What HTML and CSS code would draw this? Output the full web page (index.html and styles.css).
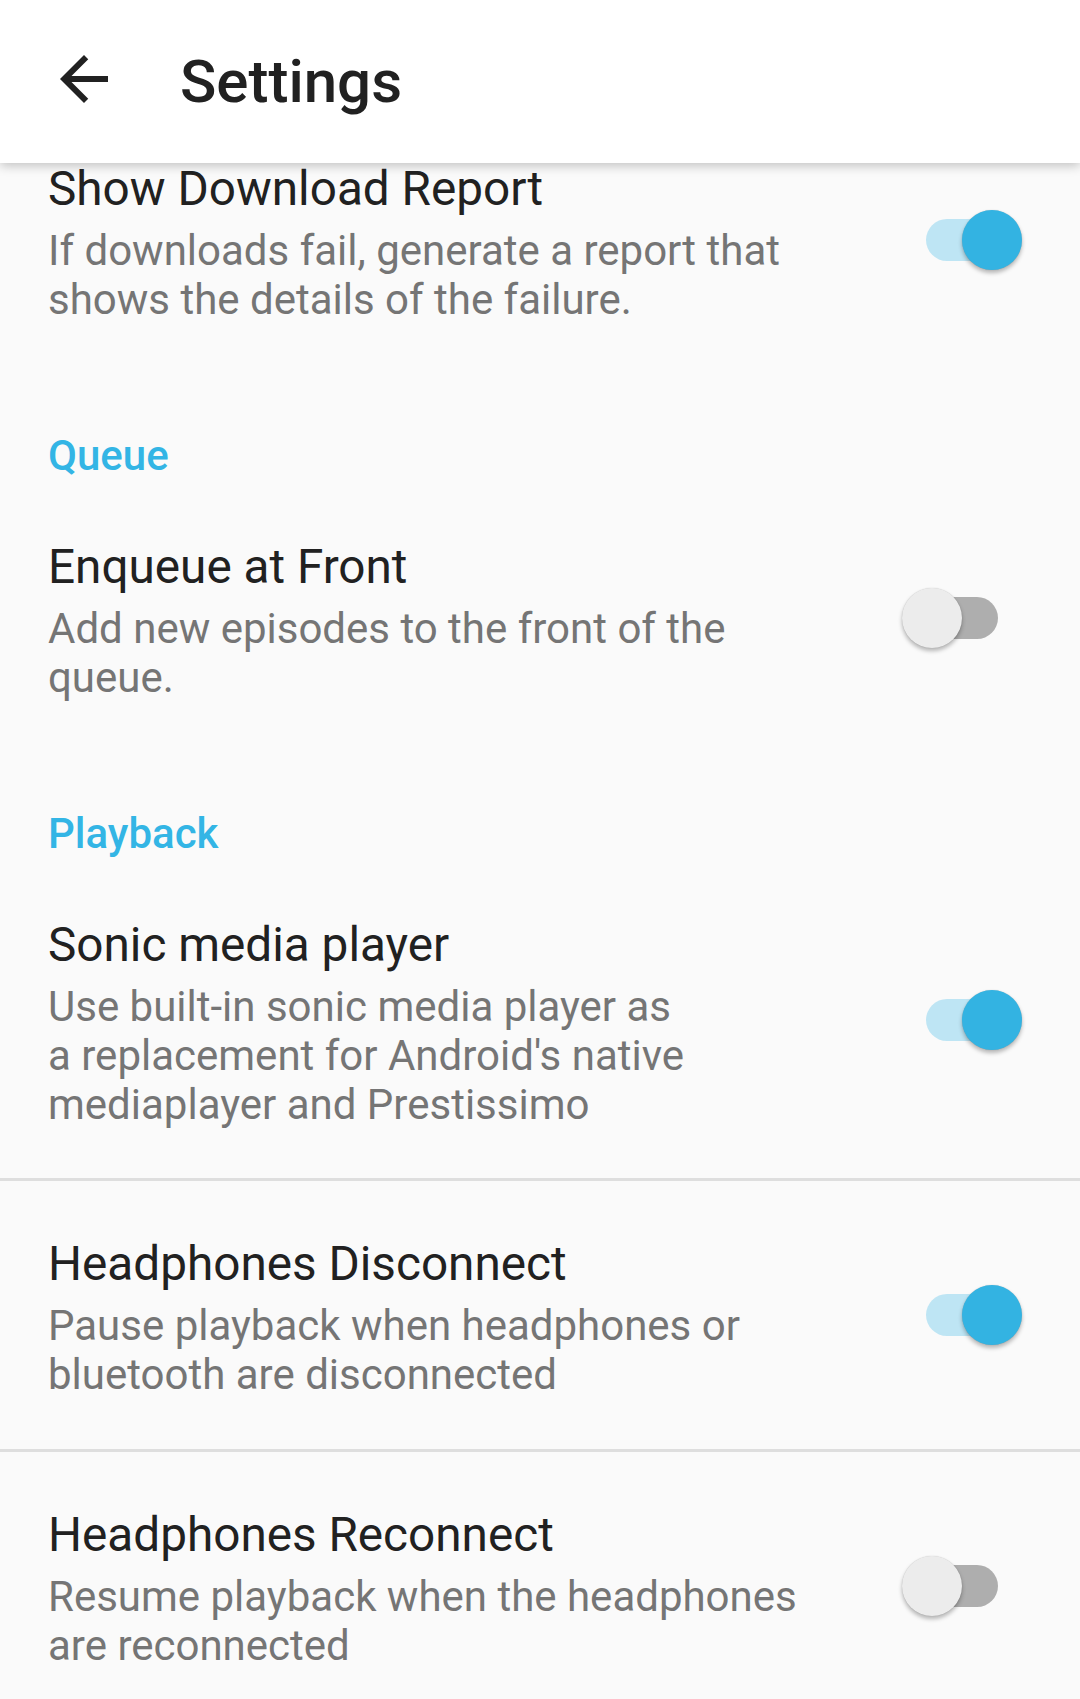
FILE: index.html
```html
<!DOCTYPE html>
<html lang="en">
<head>
<meta charset="utf-8">
<title>Settings</title>
<link rel="stylesheet" href="styles.css">
</head>
<body>
<header class="toolbar">
  <svg class="back" viewBox="0 0 24 24" width="72" height="72" aria-hidden="true">
    <path d="M20 11H7.83l5.59-5.59L12 4l-8 8 8 8 1.41-1.41L7.83 13H20v-2z" fill="#212121"/>
  </svg>
  <h1 class="title">Settings</h1>
</header>
<main class="list">
  <div class="pref">
    <div class="text">
      <div class="pref-title">Show Download Report</div>
      <div class="pref-summary">If downloads fail, generate a report that<br>shows the details of the failure.</div>
    </div>
    <div class="switch on"><span class="track"></span><span class="thumb"></span></div>
  </div>

  <div class="category">Queue</div>

  <div class="pref">
    <div class="text">
      <div class="pref-title">Enqueue at Front</div>
      <div class="pref-summary">Add new episodes to the front of the<br>queue.</div>
    </div>
    <div class="switch off"><span class="track"></span><span class="thumb"></span></div>
  </div>

  <div class="category">Playback</div>

  <div class="pref">
    <div class="text">
      <div class="pref-title">Sonic media player</div>
      <div class="pref-summary">Use built-in sonic media player as<br>a replacement for Android's native<br>mediaplayer and Prestissimo</div>
    </div>
    <div class="switch on"><span class="track"></span><span class="thumb"></span></div>
  </div>

  <div class="divider"></div>

  <div class="pref">
    <div class="text">
      <div class="pref-title">Headphones Disconnect</div>
      <div class="pref-summary">Pause playback when headphones or<br>bluetooth are disconnected</div>
    </div>
    <div class="switch on"><span class="track"></span><span class="thumb"></span></div>
  </div>

  <div class="divider"></div>

  <div class="pref">
    <div class="text">
      <div class="pref-title">Headphones Reconnect</div>
      <div class="pref-summary">Resume playback when the headphones<br>are reconnected</div>
    </div>
    <div class="switch off"><span class="track"></span><span class="thumb"></span></div>
  </div>
</main>
</body>
</html>
```

FILE: styles.css
```css
html, body {
  margin: 0;
  padding: 0;
  background: #fafafa;
}
body {
  font-family: Roboto, "Noto Sans", "Liberation Sans", sans-serif;
  width: 1080px;
  height: 1699px;
  overflow: hidden;
}

.toolbar {
  position: relative;
  z-index: 2;
  height: 163px;
  background: #ffffff;
  display: flex;
  align-items: center;
  padding-left: 48px;
  box-shadow: 0 3px 10px rgba(0, 0, 0, 0.22);
}
.back {
  display: block;
  flex: none;
  margin-bottom: 5px;
}
.title {
  margin: 0 0 0 60px;
  font-size: 60px;
  line-height: 70px;
  font-weight: 500;
  color: #212121;
}

.list {
  position: relative;
  z-index: 1;
  margin-top: -57px;
}

.pref {
  display: flex;
  align-items: center;
  padding: 55px 58px 49px 48px;
}
.text {
  flex: 1;
  min-width: 0;
}
.pref-title {
  font-size: 47.7px;
  line-height: 56px;
  color: #212121;
  white-space: nowrap;
}
.pref-summary {
  margin-top: 10px;
  font-size: 42px;
  line-height: 48.75px;
  color: #757575;
  white-space: nowrap;
}

.category {
  padding: 58px 48px 4.5px;
  font-size: 42px;
  line-height: 48px;
  font-weight: 500;
  color: #33b5e5;
}

.divider {
  height: 3px;
  background: #dedede;
}

.switch {
  position: relative;
  flex: none;
  width: 120px;
  height: 60px;
  margin: 0 0 6px 24px;
}
.track {
  position: absolute;
  left: 24px;
  top: 9px;
  width: 72px;
  height: 42px;
  border-radius: 21px;
}
.thumb {
  position: absolute;
  top: 0;
  width: 60px;
  height: 60px;
  border-radius: 50%;
  box-shadow: 0 3px 4px rgba(0, 0, 0, 0.28), 0 0 1px rgba(0, 0, 0, 0.2);
}
.switch.on .track { background: #bee5f4; }
.switch.on .thumb { left: 60px; background: #33b3e2; }
.switch.off .track { background: #aeaeae; }
.switch.off .thumb { left: 0; background: #ececec; }
```
